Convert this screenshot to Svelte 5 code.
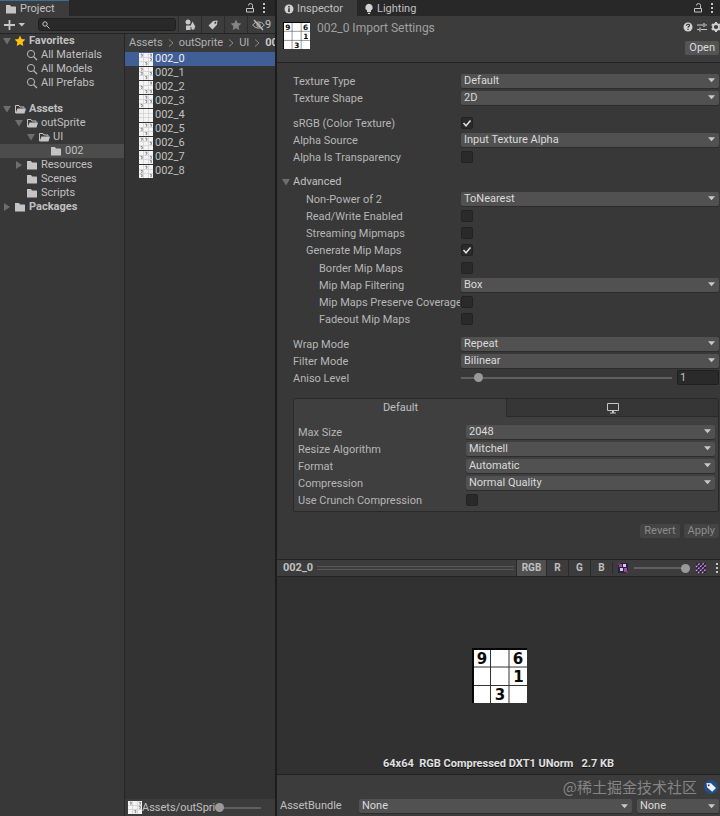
<script>
	const tree = [
		{ name: "Favorites", depth: 0, icon: "star", open: true, bold: true },
		{ name: "All Materials", depth: 1, icon: "search" },
		{ name: "All Models", depth: 1, icon: "search" },
		{ name: "All Prefabs", depth: 1, icon: "search" },
		{ name: "Assets", depth: 0, icon: "folderOpen", open: true, bold: true, gap: true },
		{ name: "outSprite", depth: 1, icon: "folderOpen", open: true },
		{ name: "UI", depth: 2, icon: "folderOpen", open: true },
		{ name: "002", depth: 3, icon: "folder", selected: true },
		{ name: "Resources", depth: 1, icon: "folder", closed: true },
		{ name: "Scenes", depth: 1, icon: "folder" },
		{ name: "Scripts", depth: 1, icon: "folder" },
		{ name: "Packages", depth: 0, icon: "folder", closed: true, bold: true }
	];

	// dots: filled sudoku cells, [column, row]
	const files = [
		{ name: "002_0", dots: [[0, 0], [2, 0], [2, 1], [1, 2]] },
		{ name: "002_1", dots: [[0, 0], [0, 1], [2, 1], [1, 2]] },
		{ name: "002_2", dots: [[2, 0], [0, 1], [1, 2], [2, 2]] },
		{ name: "002_3", dots: [[1, 0], [2, 1], [0, 2], [1, 1]] },
		{ name: "002_4", dots: [] },
		{ name: "002_5", dots: [[1, 0], [2, 0], [0, 1], [1, 2]] },
		{ name: "002_6", dots: [[0, 0], [1, 0], [2, 1], [0, 2]] },
		{ name: "002_7", dots: [[1, 0], [0, 1], [2, 1], [2, 2]] },
		{ name: "002_8", dots: [[1, 0], [0, 1], [0, 2], [2, 2]] }
	];

	let selected = $state("002_0");
	let channel = $state("RGB");
	let aniso = $state(1);
	let alpha = $state(100);
	let zoom = $state(0);
</script>

{#snippet icon(name)}
	{#if name == "folder"}
		<svg class="icon" viewBox="0 0 12 12"><path d="M1 2h4l1 1.500h4.500l.5.500v6.500H1z" fill="#c4c4c4" /></svg>
	{:else if name == "folderOpen"}
		<svg class="icon" viewBox="0 0 12 12"><path d="M1.500 10V2.500H5l1 1.500h4v1.500" fill="none" stroke="#c4c4c4" /><path d="M3.500 5.500H12L10.500 10.500H1.500z" fill="#c4c4c4" /></svg>
	{:else if name == "search"}
		<svg class="icon" viewBox="0 0 12 12" fill="none" stroke="#b8b8b8"><circle cx="5" cy="5" r="3.600" /><path d="M7.600 7.600 11 11" stroke-width="1.300" /></svg>
	{:else if name == "star"}
		<svg class="icon" viewBox="0 0 12 12"><path d="m6 .6 1.600 3.500 3.800.5-2.800 2.600.7 3.800L6 9.200 2.700 11l.7-3.800L.6 4.600l3.800-.5z" fill="#fdc113" /></svg>
	{:else if name == "lock"}
		<svg class="icon" viewBox="0 0 12 12" fill="none" stroke="#c4c4c4"><path d="M2.500 6.500h7v3.500h-7zM8.500 6V3.500a2 2 0 0 0-4 0" /></svg>
	{:else if name == "dots"}
		<svg class="icon" viewBox="0 0 12 12" fill="#c4c4c4"><path d="M5 1h2v2H5zM5 5h2v2H5zM5 9h2v2H5z" /></svg>
	{:else if name == "tag"}
		<svg class="icon" viewBox="0 0 12 12"><path d="M6.200 2 10.500 1.500 10 5.800 5.500 10.500 1.500 6.500z" fill="#c8c8c8" /><circle cx="8.300" cy="3.700" r="1" fill="#3c3c3c" /></svg>
	{:else if name == "tagLeft"}
		<svg class="icon" viewBox="0 0 12 12"><path d="M1.500 2 6 2.300l5 4.700-3.800 3.800L2 6.300z" fill="#f0f0f0" /><circle cx="3.700" cy="4.300" r="1" fill="#204f85" /></svg>
	{/if}
{/snippet}

{#snippet arrow(closed)}
	<svg class="fold" viewBox="0 0 8 8"><path d={closed ? "M1 0v8l6-4z" : "M0 1h8L4 7.500z"} fill="#6e6e6e" /></svg>
{/snippet}

{#snippet thumb(dots)}
	<svg class="thumb" viewBox="0 0 14 13">
		<path d="M0 0h14v13H0z" fill="#f4f4f4" />
		<path d="M4.500 0v13M9.500 0v13M0 4.500h14M0 8.500h14" stroke="#d2d2d2" stroke-width=".8" />
		{#each dots as [x, y]}
			<path d="M{x * 4.6 + 1.7} {y * 4.2 + 1.2}h1.500v2h-1" fill="none" stroke="#777" stroke-width=".9" />
		{/each}
	</svg>
{/snippet}

{#snippet sudoku()}
	<svg viewBox="0 0 55 55">
		<path d="M0 0h55v55H0z" fill="#fff" />
		<path d="M18.500 0v55M37 0v55M0 19h55M0 37.500h55" stroke="#333" />
		<path d="M0 1h55M1 0v55" stroke="#050505" stroke-width="2" />
		<g class="digits">
			<text x="10" y="15.500">9</text>
			<text x="46" y="15.500">6</text>
			<text x="46.500" y="34">1</text>
			<text x="28" y="52">3</text>
		</g>
	</svg>
{/snippet}

{#snippet dropdown(id, value, label = undefined)}
	<span class="dropdown">
		<select {id} aria-label={label}><option>{value}</option></select>
		<svg viewBox="0 0 8 5"><path d="M0 0h8L4 4.500z" fill="#c9c9c9" /></svg>
	</span>
{/snippet}

{#snippet selectRow(id, label, value)}
	<div class="row">
		<label for={id}>{label}</label>
		{@render dropdown(id, value)}
	</div>
{/snippet}

{#snippet checkRow(id, label, checked = false)}
	<div class="row">
		<label for={id}>{label}</label>
		<span class="check">
			<input type="checkbox" {id} {checked} />
			<svg viewBox="0 0 12 12"><path d="m2.500 6 2.500 2.700L9.500 3.500" fill="none" stroke="#dedede" stroke-width="1.600" /></svg>
		</span>
	</div>
{/snippet}

<div class="editor">
	<section class="project">
		<div class="tabs">
			<button class="tab active focused">{@render icon("folder")}Project</button>
			<span class="tools">
				<button aria-label="Lock">{@render icon("lock")}</button>
				<button aria-label="Menu">{@render icon("dots")}</button>
			</span>
		</div>

		<div class="toolbar">
			<button class="add" aria-label="Create">
				<svg viewBox="0 0 22 12"><path d="M5.500 1v10M0 6h11" stroke="#c8c8c8" stroke-width="1.800" /><path d="M14.500 4h6.500l-3.200 3.500z" fill="#c8c8c8" /></svg>
			</button>
			<span class="searchbox">
				<svg viewBox="0 0 8 8" fill="none" stroke="#c4c4c4"><circle cx="3" cy="3" r="2.200" /><path d="m4.700 4.700 2.800 2.800" /></svg>
				<input type="text" aria-label="Search" />
			</span>
			<button class="filter" aria-label="Search by type">
				<svg class="icon" viewBox="0 0 12 12" fill="#c8c8c8"><circle cx="4" cy="3" r="2.500" /><path d="M8.500 2.500 11.500 8H6zM2 6.500h4.500V11H2z" /><circle cx="9" cy="9" r="1.800" /></svg>
			</button>
			<button class="filter" aria-label="Search by label">{@render icon("tag")}</button>
			<button class="filter" aria-label="Save search">
				<svg class="icon" viewBox="0 0 12 12"><path d="m6 .6 1.600 3.500 3.800.5-2.800 2.600.7 3.800L6 9.200 2.700 11l.7-3.800L.6 4.600l3.800-.5z" fill="#858585" /></svg>
			</button>
			<button class="filter hidden-count" aria-label="Hidden packages">
				<svg viewBox="0 0 13 12" fill="none" stroke="#b8b8b8"><path d="M.7 6C3.500 2 9.500 2 12.300 6 9.500 10 3.500 10 .7 6z" /><circle cx="6.500" cy="6" r="1.600" /><path d="m2 1 9 10" stroke-width="1.400" /></svg>9
			</button>
		</div>

		<div class="browser">
			<div class="tree">
				{#each tree as item}
					<button class="node" class:bold={item.bold} class:gap={item.gap} class:current={item.selected} style="padding-left: {3 + item.depth * 12}px">
						{#if item.open || item.closed}
							{@render arrow(item.closed)}
						{:else}
							<span class="fold"></span>
						{/if}
						{@render icon(item.icon)}
						<span>{item.name}</span>
					</button>
				{/each}
			</div>

			<div class="files">
				<nav class="crumbs">
					<a href="#assets">Assets</a>
					<svg viewBox="0 0 6 8"><path d="m1 .5 4 3.500-4 3.500" fill="none" stroke="#8a8a8a" /></svg>
					<a href="#outSprite">outSprite</a>
					<svg viewBox="0 0 6 8"><path d="m1 .5 4 3.500-4 3.500" fill="none" stroke="#8a8a8a" /></svg>
					<a href="#ui">UI</a>
					<svg viewBox="0 0 6 8"><path d="m1 .5 4 3.500-4 3.500" fill="none" stroke="#8a8a8a" /></svg>
					<a href="#002" class="bold">002</a>
				</nav>
				<div class="list">
					{#each files as file}
						<button class="file" class:selected={selected == file.name} onclick={() => (selected = file.name)}>
							{@render thumb(file.dots)}
							<span>{file.name}</span>
						</button>
					{/each}
				</div>
				<div class="status">
					{@render thumb(files[0].dots)}
					<span class="path">Assets/outSprite</span>
					<input type="range" min="0" max="100" aria-label="Icon size" bind:value={zoom} />
				</div>
			</div>
		</div>
	</section>

	<section class="inspector">
		<div class="tabs">
			<button class="tab active">
				<svg class="icon" viewBox="0 0 12 12"><circle cx="6" cy="6" r="4.500" fill="#d2d2d2" /><path d="M5.200 5.300h1.600V9H5.200zM5.200 3h1.600v1.500H5.200z" fill="#333" /></svg>
				Inspector
			</button>
			<button class="tab">
				<svg class="icon" viewBox="0 0 12 12" fill="#d2d2d2"><path d="M6 .8a3.700 3.700 0 0 1 2 6.800V9H4V7.600A3.700 3.700 0 0 1 6 .8zM4.500 9.800h3L6.800 11H5.200z" /></svg>
				Lighting
			</button>
			<span class="tools">
				<button aria-label="Lock">{@render icon("lock")}</button>
				<button aria-label="Menu">{@render icon("dots")}</button>
			</span>
		</div>

		<header>
			<span class="preview-icon">{@render sudoku()}</span>
			<h1>002_0 Import Settings</h1>
			<div class="header-side">
				<div class="header-icons">
					<button aria-label="Help">
						<svg class="icon" viewBox="0 0 12 12"><circle cx="6" cy="6" r="4.500" fill="#d2d2d2" /><path d="M4.500 4.800c0-2 3-2 3-.2 0 1-1.500 1-1.500 2.200M6 7.700v1.200" fill="none" stroke="#333" stroke-width="1.200" /></svg>
					</button>
					<button aria-label="Presets">
						<svg class="icon" viewBox="0 0 12 12" fill="none" stroke="#c8c8c8" stroke-width="1.200"><path d="M1 4h6M9 4h2M8 2v4M1 8.500h2M5 8.500h6M4 6.500v4" /></svg>
					</button>
					<button aria-label="Settings">
						<svg class="icon" viewBox="0 0 12 12" fill="none" stroke="#d0d0d0"><circle cx="6" cy="6" r="3" stroke-width="1.800" /><path d="M6 1v1.500M6 9.500V11M1.700 3.500 3 4.200M9 7.800l1.300.7M1.700 8.500 3 7.800M9 4.200l1.300-.7" stroke-width="2" /></svg>
					</button>
				</div>
				<button class="btn">Open</button>
			</div>
		</header>

		<div class="settings">
			<div class="group">
				{@render selectRow("type", "Texture Type", "Default")}
				{@render selectRow("shape", "Texture Shape", "2D")}
			</div>
			<div class="group">
				{@render checkRow("srgb", "sRGB (Color Texture)", true)}
				{@render selectRow("alpha-source", "Alpha Source", "Input Texture Alpha")}
				{@render checkRow("alpha-transparency", "Alpha Is Transparency")}
			</div>
			<div class="group">
				<button class="foldout">{@render arrow(false)}Advanced</button>
				<div class="indent">
					{@render selectRow("npot", "Non-Power of 2", "ToNearest")}
					{@render checkRow("readwrite", "Read/Write Enabled")}
					{@render checkRow("streaming", "Streaming Mipmaps")}
					{@render checkRow("mipmaps", "Generate Mip Maps", true)}
					<div class="deep">
						{@render checkRow("border", "Border Mip Maps")}
						{@render selectRow("filtering", "Mip Map Filtering", "Box")}
						{@render checkRow("coverage", "Mip Maps Preserve Coverage")}
						{@render checkRow("fadeout", "Fadeout Mip Maps")}
					</div>
				</div>
			</div>
			<div class="group">
				{@render selectRow("wrap", "Wrap Mode", "Repeat")}
				{@render selectRow("filter", "Filter Mode", "Bilinear")}
				<div class="row">
					<label for="aniso">Aniso Level</label>
					<span class="slider">
						<input type="range" id="aniso" min="0" max="16" bind:value={aniso} />
						<input type="text" aria-label="Aniso Level value" bind:value={aniso} />
					</span>
				</div>
			</div>

			<div class="platforms">
				<div class="platform-tabs">
					<button class="active">Default</button>
					<button aria-label="Standalone">
						<svg viewBox="0 0 14 12" fill="none" stroke="#c4c4c4"><path d="M1.500 1.500h11v7h-11zM4 11h6" /><path d="M7 8.500V11" stroke-width="2" /></svg>
					</button>
				</div>
				<div class="platform-body">
					{@render selectRow("max-size", "Max Size", "2048")}
					{@render selectRow("resize", "Resize Algorithm", "Mitchell")}
					{@render selectRow("format", "Format", "Automatic")}
					{@render selectRow("compression", "Compression", "Normal Quality")}
					{@render checkRow("crunch", "Use Crunch Compression")}
				</div>
			</div>

			<div class="actions">
				<button class="btn" disabled>Revert</button>
				<button class="btn" disabled>Apply</button>
			</div>
		</div>

		<div class="preview-bar">
			<b>002_0</b>
			<span class="grip"></span>
			{#each ["RGB", "R", "G", "B"] as name}
				<button class="channel" class:on={channel == name} onclick={() => (channel = name)}>{name}</button>
			{/each}
			<span class="alpha">
				<svg class="icon" viewBox="0 0 12 12"><path d="M1 1h10v10H1z" fill="#2a2142" /><path d="M2 2h3v3H2zM7 6h3v4H7z" fill="#9a4f9a" /><path d="M6 2h3v3H6zM3 6h3v3H3z" fill="#dcc5e6" /><path d="M1 1h2v2H1zM9 9h2v2H9z" fill="#763565" /></svg>
				<input type="range" min="0" max="100" aria-label="Mip level" bind:value={alpha} />
				<svg class="icon" viewBox="0 0 12 12"><path d="M1 1h10v10H1z" fill="#2a2142" /><path d="m1 5 4-4M1 9l8-8M3 11l8-8M7 11l4-4" stroke="#dc9bd0" stroke-dasharray="2 1" stroke-width="1.300" /></svg>
			</span>
			<button class="more" aria-label="Preview menu">{@render icon("dots")}</button>
		</div>

		<div class="preview">
			<span class="texture">{@render sudoku()}</span>
			<p>64x64&nbsp; RGB Compressed DXT1 UNorm &nbsp; 2.7 KB</p>
		</div>

		<footer>
			<div class="label-bar">
				<span class="watermark">@稀土掘金技术社区</span>
				<button class="label-tag" aria-label="Asset labels">{@render icon("tagLeft")}</button>
			</div>
			<div class="bundle">
				<label for="bundle">AssetBundle</label>
				{@render dropdown("bundle", "None")}
				{@render dropdown("variant", "None", "AssetBundle variant")}
			</div>
		</footer>
	</section>
</div>

<style>
	:global(body) {
		background: #383838;
	}

	.editor {
		display: grid;
		grid-template-columns: 275px minmax(0, 1fr);
		gap: 2px;
		min-height: 100vh;
		background: #1c1c1c;
		color: #c0c0c0;
		font: 11px/14px Roboto, "Noto Sans CJK SC", sans-serif;
	}

	button, input, select {
		margin: 0;
		padding: 0;
		border: 0;
		border-radius: 0;
		background: none;
		color: inherit;
		font: inherit;
		appearance: none;
	}

	svg {
		display: block;
		flex: none;
	}

	.icon {
		width: 12px;
		height: 12px;
	}

	.bold {
		font-weight: 700;
	}

	.project, .inspector {
		display: flex;
		flex-direction: column;
		min-width: 0;
		background: #383838;
	}

	.tabs {
		display: flex;
		height: 16px;
		background: #282828;
	}

	.tab {
		display: flex;
		align-items: center;
		gap: 3px;
		padding: 1px 14px 0 5px;
	}

	.inspector .tab {
		padding: 1px 14px 0 6px;
		gap: 2px;
	}

	.tab.active {
		background: #3c3c3c;
	}

	.tab.focused {
		box-shadow: inset 0 1px #3a6f9c;
	}

	.tools {
		display: flex;
		align-items: center;
		gap: 2px;
		margin-left: auto;
		padding-right: 5px;
	}

	.inspector .tools {
		padding-right: 2px;
	}

	.toolbar {
		display: flex;
		align-items: center;
		height: 17px;
		border-bottom: 1px solid #232323;
		background: #3c3c3c;
	}

	.add {
		padding: 0 12px 0 4px;
	}

	.add svg {
		width: 22px;
		height: 12px;
	}

	.searchbox {
		display: flex;
		flex: 1;
		align-items: center;
		gap: 3px;
		min-width: 0;
		height: 13px;
		margin-right: 2px;
		padding-left: 3px;
		border: 1px solid #1f1f1f;
		border-radius: 3px;
		background: #292929;
		box-sizing: border-box;
	}

	.searchbox svg {
		width: 8px;
		height: 8px;
	}

	.searchbox input {
		flex: 1;
		min-width: 0;
	}

	.filter {
		display: flex;
		align-items: center;
		justify-content: center;
		width: 23px;
		height: 17px;
		border-left: 1px solid #2c2c2c;
	}

	.hidden-count {
		width: 28px;
	}

	.hidden-count svg {
		width: 13px;
		height: 12px;
	}

	.browser {
		display: grid;
		flex: 1;
		grid-template-columns: 124px minmax(0, 1fr);
		gap: 1px;
		background: #262626;
	}

	.tree {
		background: #383838;
	}

	.node {
		display: flex;
		align-items: center;
		gap: 3px;
		width: 100%;
		height: 14px;
		white-space: nowrap;
	}

	.node.gap {
		margin-top: 12px;
	}

	.node.current {
		background: #4c4c4c;
	}

	.fold {
		flex: none;
		width: 8px;
		height: 8px;
	}

	.files {
		display: flex;
		flex-direction: column;
		min-width: 0;
		background: #333;
	}

	.crumbs {
		display: flex;
		align-items: center;
		gap: 5px;
		height: 18px;
		padding-left: 4px;
		overflow: hidden;
		background: #3a3a3a;
	}

	.crumbs a {
		color: #b0b0b0;
		text-decoration: none;
	}

	.crumbs a.bold {
		color: #c8c8c8;
	}

	.crumbs svg {
		width: 6px;
		height: 8px;
	}

	.list {
		flex: 1;
	}

	.file {
		display: flex;
		align-items: center;
		gap: 2px;
		width: 100%;
		height: 14px;
		padding-left: 14px;
	}

	.file.selected {
		background: #3f5f96;
		color: #f0f0f0;
	}

	.thumb {
		width: 14px;
		height: 13px;
	}

	.status {
		display: flex;
		align-items: center;
		height: 17px;
		padding: 0 14px 0 3px;
		background: #3c3c3c;
	}

	.path {
		width: 73px;
		overflow: hidden;
		white-space: nowrap;
	}

	.status input {
		flex: 1;
		min-width: 0;
	}

	input[type="range"] {
		height: 10px;
		background: linear-gradient(#606060, #606060) center / 100% 2px no-repeat;
	}

	input[type="range"]::-webkit-slider-thumb {
		width: 9px;
		height: 9px;
		border-radius: 50%;
		background: #999;
		appearance: none;
	}

	header {
		display: flex;
		height: 46px;
		border-bottom: 1px solid #232323;
		background: #3c3c3c;
	}

	.preview-icon {
		width: 27px;
		margin: 6px 7px 0 6px;
	}

	h1 {
		flex: 1;
		margin: 4px 0 0;
		color: #a0a0a0;
		font-size: 12px;
		font-weight: 400;
		line-height: 16px;
	}

	.header-side {
		display: flex;
		flex-direction: column;
		align-items: flex-end;
		gap: 8px;
		padding-top: 5px;
	}

	.header-icons {
		display: flex;
		gap: 2px;
		margin-right: -2px;
	}

	.btn {
		height: 14px;
		margin-right: 1px;
		padding: 0 4px;
		border-radius: 2px;
		background: #545454;
		color: #dcdcdc;
	}

	.btn:disabled {
		background: #444;
		color: #8c8c8c;
	}

	.settings {
		flex: 1;
		padding: 9px 1px 0 16px;
	}

	.group {
		margin-bottom: 8px;
	}

	.row {
		display: grid;
		grid-template-columns: 168px minmax(0, 1fr);
		align-items: center;
		height: 17px;
	}

	.row label {
		margin-right: 1px;
		padding-top: 3px;
		overflow: hidden;
		color: #b6b6b6;
		white-space: nowrap;
	}

	.indent label {
		padding-left: 13px;
	}

	.deep {
		margin-top: 1px;
	}

	.deep label {
		padding-left: 26px;
	}

	.dropdown {
		display: grid;
		align-items: center;
		min-width: 0;
	}

	.dropdown select {
		grid-area: 1 / 1;
		width: 100%;
		height: 14px;
		padding: 0 16px 0 3px;
		border-radius: 2px;
		background: #515151;
		box-shadow: 0 1px #2c2c2c;
		color: #dadada;
	}

	.dropdown svg {
		grid-area: 1 / 1;
		justify-self: end;
		width: 7px;
		height: 5px;
		margin-right: 4px;
		pointer-events: none;
	}

	.check {
		display: grid;
		justify-content: start;
	}

	.check input {
		grid-area: 1 / 1;
		width: 12px;
		height: 12px;
		border: 1px solid #222;
		border-radius: 2px;
		background: #2a2a2a;
		box-sizing: border-box;
	}

	.check svg {
		grid-area: 1 / 1;
		width: 12px;
		height: 12px;
		pointer-events: none;
		visibility: hidden;
	}

	.check input:checked + svg {
		visibility: visible;
	}

	.foldout {
		display: flex;
		align-items: center;
		gap: 3px;
		height: 17px;
		margin-left: -11px;
	}

	.slider {
		display: flex;
		align-items: center;
		gap: 5px;
	}

	.slider input[type="range"] {
		flex: 1;
		min-width: 0;
	}

	.slider input[type="text"] {
		width: 42px;
		height: 15px;
		padding-left: 2px;
		border: 1px solid #1f1f1f;
		border-radius: 2px;
		background: #2a2a2a;
		box-sizing: border-box;
	}

	.platforms {
		margin-top: 12px;
		border: 1px solid #292929;
		border-radius: 2px;
		background: #3f3f3f;
	}

	.platform-tabs {
		display: grid;
		grid-template-columns: 1fr 1fr;
	}

	.platform-tabs button {
		display: flex;
		align-items: center;
		justify-content: center;
		height: 18px;
		border-bottom: 1px solid #292929;
		border-left: 1px solid #292929;
		background: #363636;
	}

	.platform-tabs .active {
		border-color: transparent;
		background: none;
	}

	.platform-tabs svg {
		width: 14px;
		height: 12px;
	}

	.platform-body {
		padding: 6px 3px 3px 4px;
	}

	.actions {
		display: flex;
		justify-content: flex-end;
		gap: 4px;
		padding: 12px 0;
	}

	.actions .btn {
		margin: 0;
	}

	.preview-bar {
		display: flex;
		align-items: center;
		height: 18px;
		padding-left: 6px;
		border-top: 1px solid #232323;
		border-bottom: 1px solid #232323;
		background: #3c3c3c;
		box-sizing: border-box;
	}

	.grip {
		flex: 1;
		height: 2px;
		margin: 0 2px 0 4px;
		border: 1px solid #5a5a5a;
		border-width: 1px 0;
	}

	.channel {
		width: 22px;
		height: 16px;
		border-left: 1px solid #2a2a2a;
		font-size: 10px;
		font-weight: 700;
	}

	.channel:first-of-type {
		width: 30px;
	}

	.channel.on {
		background: #505050;
	}

	.alpha {
		display: flex;
		align-items: center;
		gap: 5px;
		padding: 0 4px;
		border-left: 1px solid #2a2a2a;
	}

	.alpha input {
		width: 56px;
	}

	.more {
		width: 9px;
		overflow: hidden;
	}

	.preview {
		display: flex;
		flex-direction: column;
		align-items: center;
		height: 197px;
		background: #313131;
	}

	.texture {
		width: 55px;
		margin: auto;
		padding: 16px 0 0 1px;
	}

	.preview p {
		margin: 0 0 3px;
		color: #e0e0e0;
		font-weight: 700;
		text-shadow: 0 1px #111;
	}

	.digits {
		fill: #0a0a0a;
		font: 700 15px "DejaVu Sans", sans-serif;
		text-anchor: middle;
	}

	footer {
		border-top: 1px solid #202020;
		background: #3c3c3c;
		padding-bottom: 3px;
	}

	.label-bar {
		display: flex;
		align-items: center;
		justify-content: flex-end;
		gap: 7px;
		height: 24px;
		padding-right: 2px;
	}

	.watermark {
		color: #858585;
		font: 15px/20px "Noto Sans CJK SC", sans-serif;
	}

	.label-tag {
		padding: 1px;
		border-radius: 7px;
		background: #204f85;
	}

	.bundle {
		display: grid;
		grid-template-columns: 74px minmax(0, 1fr) 82px;
		gap: 5px;
		padding: 0 1px 0 3px;
	}
</style>
